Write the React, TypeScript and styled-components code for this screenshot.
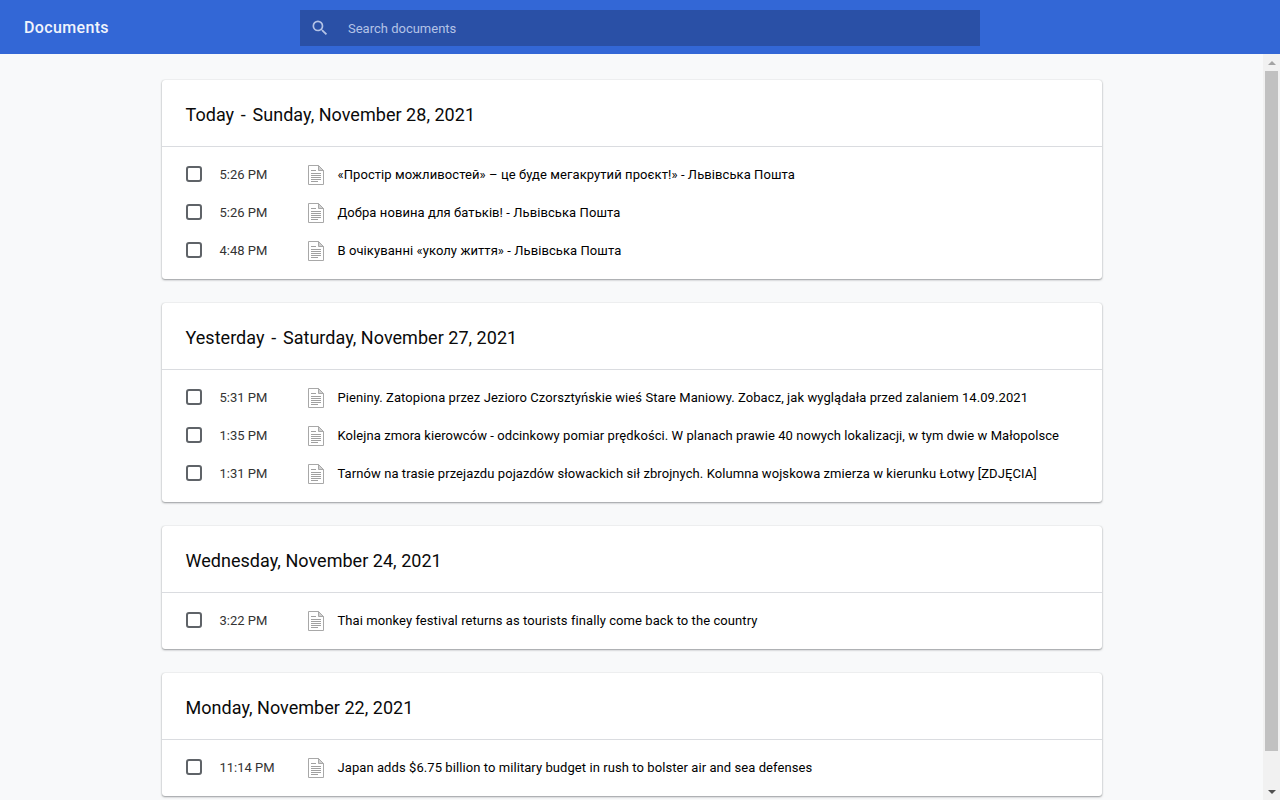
import { MdSearch } from "react-icons/md";
import styled, { createGlobalStyle } from "styled-components";

type Doc = { time: string; title: string };
type Day = { prefix?: string; label: string; docs: Doc[] };

const days: Day[] = [
  {
    prefix: "Today",
    label: "Sunday, November 28, 2021",
    docs: [
      { time: "5:26 PM", title: "«Простір можливостей» – це буде мегакрутий проєкт!» - Львівська Пошта" },
      { time: "5:26 PM", title: "Добра новина для батьків! - Львівська Пошта" },
      { time: "4:48 PM", title: "В очікуванні «уколу життя» - Львівська Пошта" },
    ],
  },
  {
    prefix: "Yesterday",
    label: "Saturday, November 27, 2021",
    docs: [
      { time: "5:31 PM", title: "Pieniny. Zatopiona przez Jezioro Czorsztyńskie wieś Stare Maniowy. Zobacz, jak wyglądała przed zalaniem 14.09.2021" },
      { time: "1:35 PM", title: "Kolejna zmora kierowców - odcinkowy pomiar prędkości. W planach prawie 40 nowych lokalizacji, w tym dwie w Małopolsce" },
      { time: "1:31 PM", title: "Tarnów na trasie przejazdu pojazdów słowackich sił zbrojnych. Kolumna wojskowa zmierza w kierunku Łotwy [ZDJĘCIA]" },
    ],
  },
  {
    label: "Wednesday, November 24, 2021",
    docs: [{ time: "3:22 PM", title: "Thai monkey festival returns as tourists finally come back to the country" }],
  },
  {
    label: "Monday, November 22, 2021",
    docs: [{ time: "11:14 PM", title: "Japan adds $6.75 billion to military budget in rush to bolster air and sea defenses" }],
  },
];

const FileIcon = () => (
  <svg width="18" height="22" viewBox="0 0 18 22" fill="none">
    <path d="M1.5 2.5H11.5L16.5 7.5V21.5H1.5Z" fill="#fff" stroke="#a8a8a8" />
    <path d="M11.5 2.5V7.5H16.5Z" fill="#d0d0d0" stroke="#a8a8a8" />
    <path d="M4 7.5H9M4 10.5H14M4 12.5H14M4 14.5H14M4 16.5H14M4 18.5H11" stroke="#a0a0a0" />
  </svg>
);

const App = () => (
  <Page>
    <GlobalStyle />
    <Header>
      <Brand>Documents</Brand>
      <Search>
        <MdSearch size={20} />
        <SearchInput placeholder="Search documents" />
      </Search>
    </Header>
    <Content>
      <Main>
        <Column>
          {days.map((day) => (
            <Card key={day.label}>
              <CardTitle>
                <span>
                  {day.prefix && (
                    <>
                      {day.prefix} <Dash>-</Dash>{" "}
                    </>
                  )}
                  {day.label}
                </span>
              </CardTitle>
              <Rows>
                {day.docs.map((doc) => (
                  <Row key={doc.title}>
                    <Check type="checkbox" />
                    <Time>{doc.time}</Time>
                    <IconSlot>
                      <FileIcon />
                    </IconSlot>
                    <Title>{doc.title}</Title>
                  </Row>
                ))}
              </Rows>
            </Card>
          ))}
        </Column>
      </Main>
      <ScrollBar>
        <ScrollArrow>
          <ArrowUp />
        </ScrollArrow>
        <ScrollLane>
          <ScrollThumb />
        </ScrollLane>
        <ScrollArrow>
          <ArrowDown />
        </ScrollArrow>
      </ScrollBar>
    </Content>
  </Page>
);

export default App;

const GlobalStyle = createGlobalStyle`
  html, body {
    margin: 0;
    height: 100%;
    overflow: hidden;
  }
  body {
    font-family: Roboto, "Liberation Sans", sans-serif;
    background: #f8f9fa;
  }
`;

const Page = styled.div`
  display: flex;
  flex-direction: column;
  height: 100vh;
`;

const Header = styled.header`
  flex: none;
  display: flex;
  align-items: center;
  height: 54px;
  background: #3367d6;
`;

const Brand = styled.div`
  width: 300px;
  padding-left: 24px;
  box-sizing: border-box;
  color: #f1f4fc;
  font-size: 16px;
  font-weight: 500;
  letter-spacing: 0.35px;
`;

const Search = styled.label`
  display: flex;
  align-items: center;
  width: 680px;
  height: 36px;
  margin-top: 2px;
  padding-left: 10px;
  box-sizing: border-box;
  background: #2a50a6;
  color: #b4c3e6;
`;

const SearchInput = styled.input`
  flex: 1;
  margin-left: 18px;
  border: 0;
  padding: 0;
  outline: 0;
  background: transparent;
  color: #fff;
  font: 400 13px Roboto, sans-serif;

  &::placeholder {
    color: #b4c3e6;
    opacity: 1;
  }
`;

const Content = styled.div`
  flex: 1;
  display: flex;
  min-height: 0;
`;

const Main = styled.main`
  flex: 1;
  overflow: hidden;
`;

const ScrollBar = styled.div`
  flex: none;
  display: flex;
  flex-direction: column;
  width: 17px;
  background: #f1f1f1;
`;

const ScrollArrow = styled.div`
  flex: none;
  display: flex;
  align-items: center;
  justify-content: center;
  height: 17px;
`;

const ArrowUp = styled.div`
  border-left: 4px solid transparent;
  border-right: 4px solid transparent;
  border-bottom: 4px solid #a3a3a3;
`;

const ArrowDown = styled.div`
  border-left: 4px solid transparent;
  border-right: 4px solid transparent;
  border-top: 4px solid #505050;
`;

const ScrollLane = styled.div`
  flex: 1;
  padding: 0 2px;
`;

const ScrollThumb = styled.div`
  height: 680px;
  background: #c1c1c1;
`;

const Column = styled.div`
  display: flex;
  flex-direction: column;
  gap: 24px;
  width: 940px;
  margin: 0 auto;
  padding: 26px 0 39px;
`;

const Card = styled.section`
  background: #fff;
  border-radius: 3px;
  box-shadow: 0 1px 2px rgba(60, 64, 67, 0.5), 0 0 1px rgba(60, 64, 67, 0.25);
`;

const CardTitle = styled.h2`
  margin: 0;
  height: 64px;
  padding: 2px 0 0 24px;
  display: flex;
  align-items: center;
  border-bottom: 1px solid #dadce0;
  color: #0a0a0a;
  font-size: 18px;
  font-weight: 400;
  letter-spacing: 0.03px;
`;

const Dash = styled.span`
  margin: 0 2.2px;
`;

const Rows = styled.div`
  padding: 8px 0 10px;
`;

const Row = styled.div`
  display: flex;
  align-items: center;
  height: 38px;
  padding-left: 24px;
`;

const Check = styled.input`
  appearance: none;
  flex: none;
  width: 16px;
  height: 16px;
  margin: 0 18px 0 0;
  border: 2px solid #5f6368;
  border-radius: 3px;
  background: #fff;
`;

const Time = styled.span`
  width: 87px;
  flex: none;
  color: #333;
  font-size: 13px;
`;

const IconSlot = styled.span`
  display: flex;
  flex: none;
  width: 31px;
`;

const Title = styled.span`
  color: #000;
  font-size: 13px;
  letter-spacing: 0.075px;
`;
